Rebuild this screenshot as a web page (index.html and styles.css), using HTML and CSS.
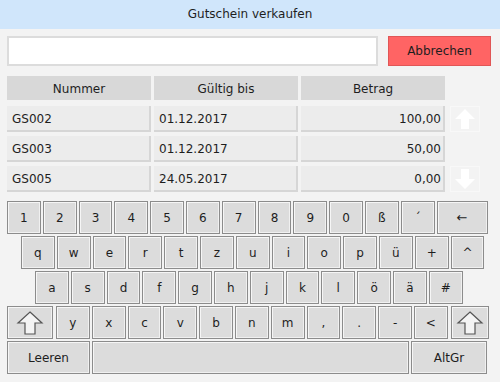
FILE: index.html
```html
<!DOCTYPE html>
<html lang="de">
<head>
    <meta charset="UTF-8">
    <title>Gutschein verkaufen</title>
    <link rel="stylesheet" href="styles.css">
</head>
<body>
    <header class="titlebar">Gutschein verkaufen</header>

    <section class="search-row">
        <input class="search" type="text">
        <button class="btn-cancel">Abbrechen</button>
    </section>

    <section class="table">
        <div class="th">Nummer</div>
        <div class="th">Gültig bis</div>
        <div class="th">Betrag</div>
        <div class="spacer"></div>

        <div class="td">GS002</div>
        <div class="td">01.12.2017</div>
        <div class="td num">100,00</div>
        <div class="scroll">
            <svg width="22" height="22" viewBox="0 0 22 22"><path d="M11 1 L21 11 L15 11 L15 21 L7 21 L7 11 L1 11 Z" fill="#fff"/></svg>
        </div>

        <div class="td">GS003</div>
        <div class="td">01.12.2017</div>
        <div class="td num">50,00</div>
        <div class="spacer"></div>

        <div class="td">GS005</div>
        <div class="td">24.05.2017</div>
        <div class="td num">0,00</div>
        <div class="scroll">
            <svg width="22" height="22" viewBox="0 0 22 22"><path d="M11 21 L21 11 L15 11 L15 1 L7 1 L7 11 L1 11 Z" fill="#fff"/></svg>
        </div>
    </section>

    <section class="keyboard">
        <div class="krow">
            <span class="key">1</span><span class="key">2</span><span class="key">3</span><span class="key">4</span><span class="key">5</span><span class="key">6</span><span class="key">7</span><span class="key">8</span><span class="key">9</span><span class="key">0</span><span class="key">ß</span><span class="key">´</span><span class="key back">←</span>
        </div>
        <div class="krow row-q">
            <span class="key">q</span><span class="key">w</span><span class="key">e</span><span class="key">r</span><span class="key">t</span><span class="key">z</span><span class="key">u</span><span class="key">i</span><span class="key">o</span><span class="key">p</span><span class="key">ü</span><span class="key">+</span><span class="key">^</span>
        </div>
        <div class="krow row-a">
            <span class="key">a</span><span class="key">s</span><span class="key">d</span><span class="key">f</span><span class="key">g</span><span class="key">h</span><span class="key">j</span><span class="key">k</span><span class="key">l</span><span class="key">ö</span><span class="key">ä</span><span class="key">#</span>
        </div>
        <div class="krow">
            <span class="key shift"><svg width="34" height="26" viewBox="0 0 34 26"><path d="M17 2 L29 13 L22 13 L22 24 L12 24 L12 13 L5 13 Z" fill="#f4f4f4" stroke="#555" stroke-width="1.2" stroke-linejoin="miter"/></svg></span><span class="key">y</span><span class="key">x</span><span class="key">c</span><span class="key">v</span><span class="key">b</span><span class="key">n</span><span class="key">m</span><span class="key">,</span><span class="key">.</span><span class="key">-</span><span class="key">&lt;</span><span class="key shift-r"><svg width="34" height="26" viewBox="0 0 34 26"><path d="M17 2 L29 13 L22 13 L22 24 L12 24 L12 13 L5 13 Z" fill="#f4f4f4" stroke="#555" stroke-width="1.2"/></svg></span>
        </div>
        <div class="krow">
            <span class="key leeren">Leeren</span><span class="key space"></span><span class="key altgr">AltGr</span>
        </div>
    </section>
</body>
</html>
```

FILE: styles.css
```css
* {
    margin: 0;
    padding: 0;
    box-sizing: border-box;
}

body {
    background: #f3f3f3;
    color: #1e1e1e;
    font-family: 'DejaVu Sans', Verdana, sans-serif;
    font-size: 12px;
    width: 500px;
    height: 382px;
    overflow: hidden;
}

.titlebar {
    height: 29px;
    background: #d0e6fb;
    text-align: center;
    line-height: 29px;
    font-size: 12px;
}

.search-row {
    display: flex;
    gap: 10px;
    padding: 7px 0 0 7px;
}

.search {
    width: 371px;
    height: 30px;
    background: #fff;
    border: 2px solid #dcdcdc;
    outline: none;
}

.btn-cancel {
    width: 103px;
    height: 30px;
    background: #ff6464;
    border: 1px solid #e05656;
    font-family: inherit;
    font-size: 12px;
    color: #1e1e1e;
}

.table {
    display: grid;
    grid-template-columns: 144px 144px 144px 32px;
    grid-template-rows: 26px 28px 28px 28px;
    column-gap: 3px;
    row-gap: 2px;
    padding: 10px 0 0 7px;
}

.th {
    background: #d8d8d8;
    text-align: center;
    line-height: 26px;
    margin-bottom: 2px;
}

.td {
    background: #ececec;
    border-right: 2px solid #d6d6d6;
    border-bottom: 2px solid #d6d6d6;
    line-height: 27px;
    padding-left: 5px;
    margin-top: 2px;
}

.td.num {
    text-align: right;
    padding: 0 2px 0 0;
}

.scroll {
    margin: 2px 0 0 2px;
    height: 26px;
    border: 1px solid #f8f8f8;
    display: flex;
    align-items: center;
    justify-content: center;
}

.keyboard {
    padding: 9px 0 0 7px;
    display: flex;
    flex-direction: column;
    gap: 2px;
}

.krow {
    display: flex;
    gap: 2px;
}

.row-q {
    padding-left: 14px;
}

.row-a {
    padding-left: 28px;
}

.key {
    width: 33.8px;
    height: 33px;
    background: #dcdcdc;
    border: 1px solid #8c8c8c;
    box-shadow: inset 1px 1px 0 #f6f6f6, inset -1px -1px 0 #f0f0f0;
    display: flex;
    align-items: center;
    justify-content: center;
    font-size: 12px;
    color: #1e1e1e;
}

.back {
    width: 51px;
    font-size: 13px;
}

.shift {
    width: 46px;
    margin-right: 1px;
}

.shift-r {
    width: 38px;
    margin-left: 1px;
}

.leeren {
    width: 83px;
}

.space {
    width: 317px;
}

.altgr {
    width: 76px;
}
```
